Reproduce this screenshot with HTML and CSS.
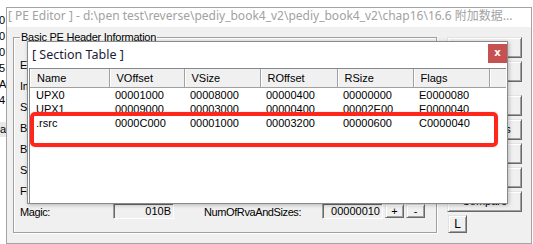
FILE: index.html
```html
<!DOCTYPE html>
<html>
<head>
<meta charset="utf-8">
<link rel="stylesheet" href="styles.css">
</head>
<body>
<div class="bgwin">
  <div class="bg-top"><span class="bt1">F</span><span class="bt2">x0000</span><span class="bt3">0000x000</span></div>
  <div class="bg-col">
    <div class="bc">0</div><div class="bc">0</div><div class="bc">0</div><div class="bc">5</div><div class="bc">A</div><div class="bc">4</div>
  </div>
  <div class="bg-band">a</div>
</div>

<div class="pewin">
  <div class="pe-title">[ PE Editor ] - d:\pen test\reverse\pediy_book4_v2\pediy_book4_v2\chap16\16.6 附加数据...</div>
  <div class="pe-client">
    <fieldset class="group">
      <legend>Basic PE Header Information</legend>
      <div class="rows">
        <span class="lbl">EntryPoint:</span><span class="fld">00009B30</span><span class="lbl lbl2">SubSystem:</span><span class="fld">0002</span><span></span><span></span>
        <span class="lbl">ImageBase:</span><span class="fld">00400000</span><span class="lbl lbl2">NumberOfSections:</span><span class="fld">0003</span><span></span><span></span>
        <span class="lbl">SizeOfImage:</span><span class="fld">0000D000</span><span class="lbl lbl2">TimeDateStamp:</span><span class="fld">4A2F1B6C</span><span></span><span></span>
        <span class="lbl">BaseOfCode:</span><span class="fld">00009000</span><span class="lbl lbl2">PointerToSymbolTable:</span><span class="fld">00000000</span><span></span><span></span>
        <span class="lbl">BaseOfData:</span><span class="fld">0000C000</span><span class="lbl lbl2">NumberOfSymbols:</span><span class="fld">00000000</span><span></span><span></span>
        <span class="lbl">SectionAlignment:</span><span class="fld">00001000</span><span class="lbl lbl2">SizeOfOptionalHeader:</span><span class="fld">00E0</span><span></span><span></span>
        <span class="lbl">FileAlignment:</span><span class="fld">00000200</span><span class="lbl lbl2">Characteristics:</span><span class="fld">010F</span><span></span><span></span>
        <span class="lbl">Magic:</span><span class="fld">010B</span><span class="lbl lbl2">NumOfRvaAndSizes:</span><span class="fld">00000010</span><span class="sbtn">+</span><span class="sbtn">-</span>
      </div>
    </fieldset>
    <div class="btncol">
      <div class="btn">Close</div>
      <div class="btn gap-after">Save</div>
      <div class="btn">Sections</div>
      <div class="btn">Directories</div>
      <div class="btn">FLC</div>
      <div class="btn">TDSC</div>
      <div class="btn">Compare</div>
      <div class="btn small">L</div>
    </div>
  </div>
</div>

<div class="dialog">
  <div class="dlg-title">
    <span class="dlg-text">[ Section Table ]</span>
    <span class="close">x</span>
  </div>
  <div class="listview">
    <table>
      <colgroup>
        <col class="c1"><col class="c2"><col class="c3"><col class="c4"><col class="c5"><col class="c6"><col class="c7">
      </colgroup>
      <thead>
        <tr><th>Name</th><th>VOffset</th><th>VSize</th><th>ROffset</th><th>RSize</th><th>Flags</th><th></th></tr>
      </thead>
      <tbody>
        <tr><td>UPX0</td><td>00001000</td><td>00008000</td><td>00000400</td><td>00000000</td><td>E0000080</td><td></td></tr>
        <tr><td>UPX1</td><td>00009000</td><td>00003000</td><td>00000400</td><td>00002E00</td><td>E0000040</td><td></td></tr>
        <tr><td>.rsrc</td><td>0000C000</td><td>00001000</td><td>00003200</td><td>00000600</td><td>C0000040</td><td></td></tr>
      </tbody>
    </table>
  </div>
</div>

<div class="mark"></div>
</body>
</html>
```

FILE: styles.css
```css
* { box-sizing: border-box; }

body {
  margin: 0;
  width: 533px;
  height: 244px;
  overflow: hidden;
  position: relative;
  background: #fff;
  font-family: "Liberation Sans", Arial, sans-serif;
  font-size: 11px;
  color: #000;
}

/* background window */
.bgwin {
  position: absolute;
  left: 0;
  top: 0;
  width: 533px;
  height: 244px;
  background: #fff;
}
.bg-top {
  position: relative;
  top: -9px;
  height: 11px;
  line-height: 11px;
  white-space: nowrap;
}
.bg-top span { position: absolute; top: 0; }
.bt1 { left: 0; }
.bt2 { left: 32px; }
.bt3 { left: 65px; }
.bg-col {
  position: absolute;
  left: -1px;
  top: 15px;
  display: flex;
  flex-direction: column;
  gap: 5px;
  line-height: 11px;
}
.bc { height: 11px; }
.bg-band {
  position: absolute;
  left: 0;
  top: 122px;
  width: 20px;
  height: 15px;
  background: #e8e8e8;
  line-height: 15px;
}

/* PE editor window */
.pewin {
  position: absolute;
  left: 6px;
  top: 7px;
  width: 526px;
  height: 237px;
  border: 1px solid #a3a3a3;
  background: #f0f0f0;
  display: flex;
  flex-direction: column;
}
.pe-title {
  height: 19px;
  background: #fff;
  color: #a2a2a2;
  font-family: "Noto Sans", "Noto Sans CJK SC", sans-serif;
  font-size: 12px;
  line-height: 15px;
  padding-left: 1px;
  white-space: nowrap;
  overflow: hidden;
}
.pe-client {
  flex: 1;
  display: flex;
  gap: 10px;
  padding: 4px 9px 0 6px;
}

.group {
  margin: 0;
  width: 424px;
  height: 202px;
  padding: 0 0 0 6px;
  border: 1px solid #a0a0a0;
  box-shadow: inset 1px 1px 0 #fff, 1px 1px 0 #fff;
  min-width: 0;
}
.group legend {
  padding: 0 1px;
  margin-left: 0;
  line-height: 13px;
  font-size: 11px;
  letter-spacing: -0.25px;
}
.rows {
  margin-top: 12px;
  display: grid;
  grid-template-columns: 93px 61px 148px 61px 21px 21px;
  grid-auto-rows: 21px;
}
.lbl {
  line-height: 19px;
  white-space: nowrap;
  letter-spacing: -0.4px;
}
.lbl2 { padding-left: 30px; }
.fld {
  height: 16px;
  line-height: 14px;
  text-align: right;
  padding-right: 2px;
  background: #f0f0f0;
  border: 1px solid;
  border-color: #a0a0a0 #fff #fff #a0a0a0;
  box-shadow: inset 1px 1px 0 #696969;
}
.sbtn {
  justify-self: end;
  margin-top: 1px;
  width: 19px;
  height: 14px;
  line-height: 12px;
  text-align: center;
  background: #f0f0f0;
  border: 1px solid;
  border-color: #e3e3e3 #696969 #696969 #e3e3e3;
  box-shadow: inset 1px 1px 0 #fff, inset -1px -1px 0 #a0a0a0;
}

.btncol {
  width: 75px;
  padding-top: 6px;
  display: flex;
  flex-direction: column;
  gap: 3px;
}
.btn {
  height: 21px;
  line-height: 19px;
  text-align: center;
  background: #f0f0f0;
  border: 1px solid;
  border-color: #e3e3e3 #696969 #696969 #e3e3e3;
  box-shadow: inset 1px 1px 0 #fff, inset -1px -1px 0 #a0a0a0;
  white-space: nowrap;
}
.btn.gap-after { margin-bottom: 10px; }
.btn.small {
  width: 19px;
  height: 18px;
  line-height: 16px;
  margin-left: 1px;
  font-size: 12px;
}

/* section table dialog */
.dialog {
  position: absolute;
  left: 27px;
  top: 41px;
  width: 481px;
  height: 163px;
  background: #fff;
  border: 1px solid #8a8a8a;
  box-shadow: 1px 1px 4px rgba(0, 0, 0, 0.25);
  display: flex;
  flex-direction: column;
}
.dlg-title {
  height: 26px;
  display: flex;
  align-items: flex-start;
  justify-content: space-between;
}
.dlg-text {
  padding-left: 4px;
  padding-top: 3px;
  font-family: "Noto Sans", sans-serif;
  font-size: 12.5px;
  line-height: 20px;
  color: #1c1c3a;
}
.close {
  margin-top: 2px;
  width: 19px;
  height: 19px;
  background: #c75050;
  color: #fff;
  font-family: "DejaVu Sans", sans-serif;
  font-size: 10px;
  font-weight: bold;
  line-height: 17px;
  text-align: center;
}
.listview {
  flex: 1;
  margin: 0 1px 0 1px;
  border-left: 1px solid #828790;
  border-top: 1px solid #828790;
  overflow: hidden;
}
table {
  border-collapse: collapse;
  table-layout: fixed;
  width: 476px;
}
.c1 { width: 79px; }
.c2 { width: 75px; }
.c3 { width: 76px; }
.c4 { width: 77px; }
.c5 { width: 76px; }
.c6 { width: 76px; }
.c7 { width: 17px; }
th {
  height: 18px;
  padding: 0 0 0 7px;
  text-align: left;
  font-weight: normal;
  background: #f0f0f0;
  border-right: 1px solid #a0a0a0;
  border-bottom: 1px solid #a0a0a0;
  box-shadow: inset 1px 0 0 #fff;
  white-space: nowrap;
  line-height: 16px;
}
td {
  height: 14px;
  padding: 0 0 0 6px;
  line-height: 14px;
  white-space: nowrap;
}

/* red annotation frame */
.mark {
  position: absolute;
  left: 30px;
  top: 112px;
  width: 468px;
  height: 35px;
  border: 4px solid #ff261b;
  border-radius: 5px;
  box-shadow: 0 0 1px #ff6a60;
}
```
